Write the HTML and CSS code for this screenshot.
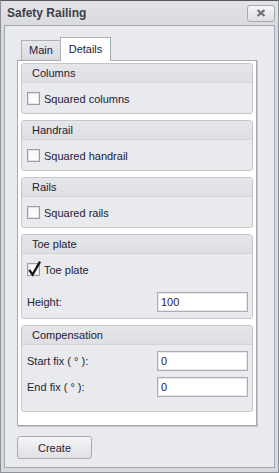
FILE: index.html
```html
<!DOCTYPE html>
<html lang="en">

<head>
    <meta charset="UTF-8">
    <title>Safety Railing</title>
    <link rel="stylesheet" href="styles.css">
</head>

<body>

    <div class="window">
        <header class="titlebar">
            <span class="title">Safety Railing</span>
            <button class="close">
                <svg width="10" height="8" viewBox="0 0 10 8">
                    <path d="M1.5 1 L8.5 7 M8.5 1 L1.5 7" stroke="#6c6e74" stroke-width="2.2" fill="none"/>
                </svg>
            </button>
        </header>

        <div class="client">

            <nav class="tabs">
                <div class="tab">Main</div>
                <div class="tab active">Details</div>
            </nav>

            <div class="panel">

                <section class="group">
                    <div class="group-head">Columns</div>
                    <div class="group-body">
                        <label class="check"><span class="box"></span>Squared columns</label>
                    </div>
                </section>

                <section class="group">
                    <div class="group-head">Handrail</div>
                    <div class="group-body">
                        <label class="check"><span class="box"></span>Squared handrail</label>
                    </div>
                </section>

                <section class="group">
                    <div class="group-head">Rails</div>
                    <div class="group-body">
                        <label class="check"><span class="box"></span>Squared rails</label>
                    </div>
                </section>

                <section class="group">
                    <div class="group-head">Toe plate</div>
                    <div class="group-body toe">
                        <label class="check">
                            <span class="box checked">
                                <svg width="16" height="18" viewBox="0 0 16 18">
                                    <path d="M3.2 10.8 L6.6 15.6 L14 2.6" stroke="#141414" stroke-width="2.3" fill="none"/>
                                </svg>
                            </span>Toe plate
                        </label>
                        <div class="field height-field">
                            <span>Height:</span>
                            <input type="text" value="100">
                        </div>
                    </div>
                </section>

                <section class="group">
                    <div class="group-head">Compensation</div>
                    <div class="group-body comp">
                        <div class="field">
                            <span>Start fix ( &deg; ):</span>
                            <input type="text" value="0">
                        </div>
                        <div class="field">
                            <span>End fix ( &deg; ):</span>
                            <input type="text" value="0">
                        </div>
                    </div>
                </section>

            </div>

            <button class="create">Create</button>

        </div>
    </div>

</body>

</html>
```

FILE: styles.css
```css
body {
    margin: 0;
    font-family: "Liberation Sans", Arial, sans-serif;
    font-size: 11px;
    color: #1f2136;
}

/* WINDOW */

.window {
    width: 279px;
    height: 473px;
    box-sizing: border-box;
    border: 1px solid #8e9197;
    border-top-color: #55575c;
    background: #d7d9de;
    padding: 0 3px 4px 3px;
    display: flex;
    flex-direction: column;
}

.titlebar {
    height: 24px;
    flex-shrink: 0;
    display: flex;
    align-items: center;
    justify-content: space-between;
    background: linear-gradient(#e2e3e7, #d9dbdf);
    margin: 0 -3px;
    padding: 0 3px 0 6px;
}

.title {
    font-weight: bold;
    font-size: 12px;
    color: #3e4046;
}

.close {
    width: 28px;
    height: 17px;
    padding: 0;
    border: 1px solid #a6a9b0;
    border-radius: 3px;
    background: linear-gradient(#f4f5f7, #dcdee2);
    display: flex;
    align-items: center;
    justify-content: center;
}

.client {
    flex: 1;
    border: 1px solid #a3a6ac;
    background: #e9eaee;
    padding-top: 11px;
}

/* TABS */

.tabs {
    display: flex;
    align-items: flex-end;
    margin-left: 16px;
    height: 23px;
}

.tab {
    width: 39px;
    height: 20px;
    box-sizing: border-box;
    border: 1px solid #acafb6;
    border-bottom: none;
    border-right: none;
    background: linear-gradient(#e7e8eb, #dadbe0);
    text-align: center;
    line-height: 19px;
}

.tab.active {
    position: relative;
    width: 51px;
    height: 24px;
    margin-bottom: -1px;
    border-right: 1px solid #a6a9b0;
    background: #fff;
    line-height: 23px;
}

.panel {
    margin-left: 12px;
    width: 240px;
    height: 366px;
    box-sizing: border-box;
    border: 1px solid #a6a9b0;
    box-shadow: 1px 1px 0 #c4c6cb;
    background: #fff;
    padding: 2px 3px;
    display: flex;
    flex-direction: column;
    gap: 6px;
}

/* GROUPS */

.group {
    border: 1px solid #c5c7cc;
    border-radius: 3px;
    background: #e9eaed;
}

.group-head {
    height: 18px;
    line-height: 18px;
    padding-left: 10px;
    border-bottom: 1px solid #d3d5d9;
    border-radius: 3px 3px 0 0;
    background: linear-gradient(#e5e6ea, #dedfe3);
}

.group-body {
    padding: 9px 4px 8px 5px;
}

.check {
    display: flex;
    align-items: center;
    gap: 4px;
    height: 13px;
}

.box {
    position: relative;
    width: 13px;
    height: 13px;
    box-sizing: border-box;
    border: 1px solid #9b9ea5;
    background: linear-gradient(#f7f7f8, #ffffff);
    box-shadow: inset 0 0 0 1px #e2e4e7;
}

.box svg {
    position: absolute;
    left: -2px;
    top: -5px;
}

.toe {
    padding-bottom: 6px;
}

.comp {
    padding: 6px 4px 14px 5px;
    display: flex;
    flex-direction: column;
    gap: 6px;
}

.field {
    display: flex;
    align-items: center;
    justify-content: space-between;
}

.height-field {
    margin-top: 16px;
}

.field input {
    width: 91px;
    height: 20px;
    box-sizing: border-box;
    border: 1px solid #aaadb4;
    box-shadow: inset 0 0 0 1px #e6e7ea;
    padding: 0 3px;
    font-family: "Liberation Sans", Arial, sans-serif;
    font-size: 11px;
    color: #1f2136;
    background: #fff;
}

/* BUTTON */

.create {
    margin: 10px 0 0 12px;
    width: 75px;
    height: 23px;
    border: 1px solid #a8abb2;
    border-radius: 3px;
    background: linear-gradient(#f6f6f8, #dfe0e4);
    font-family: "Liberation Sans", Arial, sans-serif;
    font-size: 11px;
    color: #1f2136;
}
```
